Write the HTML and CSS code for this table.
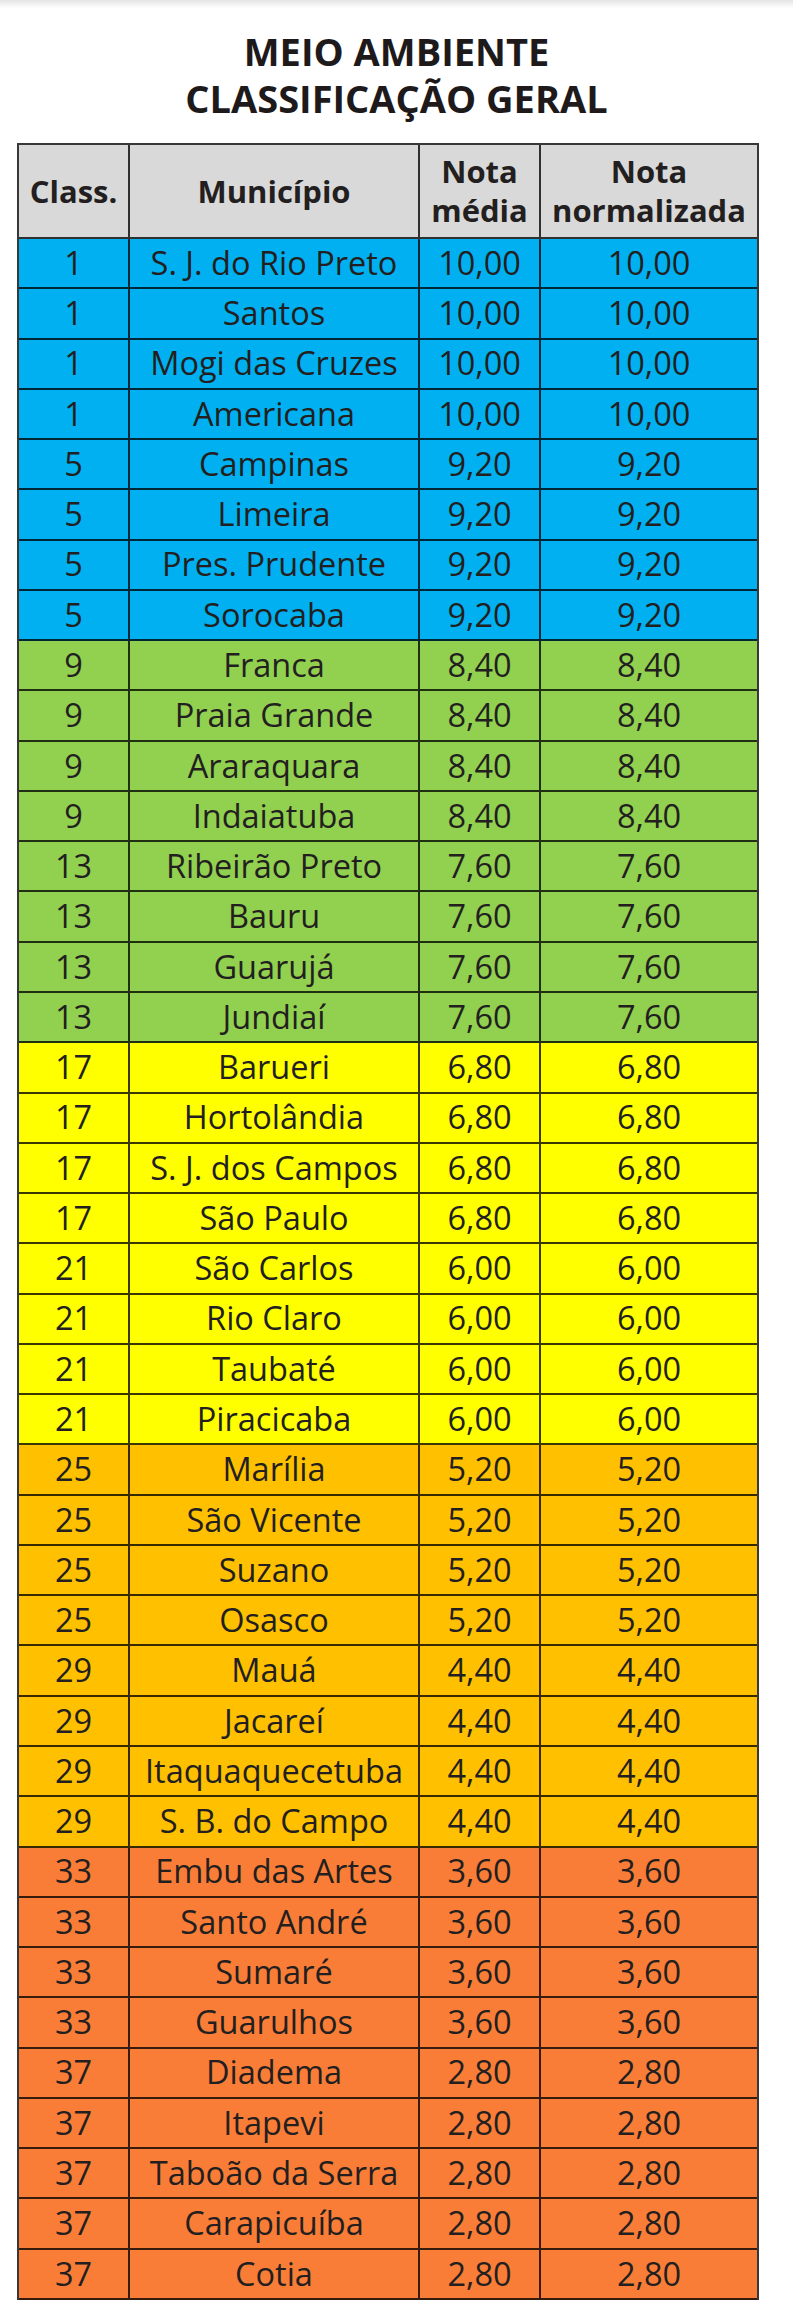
FILE: index.html
```html
<!DOCTYPE html>
<html lang="pt-BR">
<head>
<meta charset="utf-8">
<title>Meio Ambiente - Classificação Geral</title>
<link rel="stylesheet" href="styles.css">
</head>
<body>
<div class="topshade"></div>
<h1 class="title">MEIO AMBIENTE<br>CLASSIFICAÇÃO GERAL</h1>
<div class="table">
  <div class="row head">
    <div class="cell">Class.</div>
    <div class="cell">Município</div>
    <div class="cell">Nota<br>média</div>
    <div class="cell">Nota<br>normalizada</div>
  </div>
  <div class="row blue"><div class="cell">1</div><div class="cell">S. J. do Rio Preto</div><div class="cell">10,00</div><div class="cell">10,00</div></div>
  <div class="row blue"><div class="cell">1</div><div class="cell">Santos</div><div class="cell">10,00</div><div class="cell">10,00</div></div>
  <div class="row blue"><div class="cell">1</div><div class="cell">Mogi das Cruzes</div><div class="cell">10,00</div><div class="cell">10,00</div></div>
  <div class="row blue"><div class="cell">1</div><div class="cell">Americana</div><div class="cell">10,00</div><div class="cell">10,00</div></div>
  <div class="row blue"><div class="cell">5</div><div class="cell">Campinas</div><div class="cell">9,20</div><div class="cell">9,20</div></div>
  <div class="row blue"><div class="cell">5</div><div class="cell">Limeira</div><div class="cell">9,20</div><div class="cell">9,20</div></div>
  <div class="row blue"><div class="cell">5</div><div class="cell">Pres. Prudente</div><div class="cell">9,20</div><div class="cell">9,20</div></div>
  <div class="row blue"><div class="cell">5</div><div class="cell">Sorocaba</div><div class="cell">9,20</div><div class="cell">9,20</div></div>
  <div class="row green"><div class="cell">9</div><div class="cell">Franca</div><div class="cell">8,40</div><div class="cell">8,40</div></div>
  <div class="row green"><div class="cell">9</div><div class="cell">Praia Grande</div><div class="cell">8,40</div><div class="cell">8,40</div></div>
  <div class="row green"><div class="cell">9</div><div class="cell">Araraquara</div><div class="cell">8,40</div><div class="cell">8,40</div></div>
  <div class="row green"><div class="cell">9</div><div class="cell">Indaiatuba</div><div class="cell">8,40</div><div class="cell">8,40</div></div>
  <div class="row green"><div class="cell">13</div><div class="cell">Ribeirão Preto</div><div class="cell">7,60</div><div class="cell">7,60</div></div>
  <div class="row green"><div class="cell">13</div><div class="cell">Bauru</div><div class="cell">7,60</div><div class="cell">7,60</div></div>
  <div class="row green"><div class="cell">13</div><div class="cell">Guarujá</div><div class="cell">7,60</div><div class="cell">7,60</div></div>
  <div class="row green"><div class="cell">13</div><div class="cell">Jundiaí</div><div class="cell">7,60</div><div class="cell">7,60</div></div>
  <div class="row yellow"><div class="cell">17</div><div class="cell">Barueri</div><div class="cell">6,80</div><div class="cell">6,80</div></div>
  <div class="row yellow"><div class="cell">17</div><div class="cell">Hortolândia</div><div class="cell">6,80</div><div class="cell">6,80</div></div>
  <div class="row yellow"><div class="cell">17</div><div class="cell">S. J. dos Campos</div><div class="cell">6,80</div><div class="cell">6,80</div></div>
  <div class="row yellow"><div class="cell">17</div><div class="cell">São Paulo</div><div class="cell">6,80</div><div class="cell">6,80</div></div>
  <div class="row yellow"><div class="cell">21</div><div class="cell">São Carlos</div><div class="cell">6,00</div><div class="cell">6,00</div></div>
  <div class="row yellow"><div class="cell">21</div><div class="cell">Rio Claro</div><div class="cell">6,00</div><div class="cell">6,00</div></div>
  <div class="row yellow"><div class="cell">21</div><div class="cell">Taubaté</div><div class="cell">6,00</div><div class="cell">6,00</div></div>
  <div class="row yellow"><div class="cell">21</div><div class="cell">Piracicaba</div><div class="cell">6,00</div><div class="cell">6,00</div></div>
  <div class="row amber"><div class="cell">25</div><div class="cell">Marília</div><div class="cell">5,20</div><div class="cell">5,20</div></div>
  <div class="row amber"><div class="cell">25</div><div class="cell">São Vicente</div><div class="cell">5,20</div><div class="cell">5,20</div></div>
  <div class="row amber"><div class="cell">25</div><div class="cell">Suzano</div><div class="cell">5,20</div><div class="cell">5,20</div></div>
  <div class="row amber"><div class="cell">25</div><div class="cell">Osasco</div><div class="cell">5,20</div><div class="cell">5,20</div></div>
  <div class="row amber"><div class="cell">29</div><div class="cell">Mauá</div><div class="cell">4,40</div><div class="cell">4,40</div></div>
  <div class="row amber"><div class="cell">29</div><div class="cell">Jacareí</div><div class="cell">4,40</div><div class="cell">4,40</div></div>
  <div class="row amber"><div class="cell">29</div><div class="cell">Itaquaquecetuba</div><div class="cell">4,40</div><div class="cell">4,40</div></div>
  <div class="row amber"><div class="cell">29</div><div class="cell">S. B. do Campo</div><div class="cell">4,40</div><div class="cell">4,40</div></div>
  <div class="row orange"><div class="cell">33</div><div class="cell">Embu das Artes</div><div class="cell">3,60</div><div class="cell">3,60</div></div>
  <div class="row orange"><div class="cell">33</div><div class="cell">Santo André</div><div class="cell">3,60</div><div class="cell">3,60</div></div>
  <div class="row orange"><div class="cell">33</div><div class="cell">Sumaré</div><div class="cell">3,60</div><div class="cell">3,60</div></div>
  <div class="row orange"><div class="cell">33</div><div class="cell">Guarulhos</div><div class="cell">3,60</div><div class="cell">3,60</div></div>
  <div class="row orange"><div class="cell">37</div><div class="cell">Diadema</div><div class="cell">2,80</div><div class="cell">2,80</div></div>
  <div class="row orange"><div class="cell">37</div><div class="cell">Itapevi</div><div class="cell">2,80</div><div class="cell">2,80</div></div>
  <div class="row orange"><div class="cell">37</div><div class="cell">Taboão da Serra</div><div class="cell">2,80</div><div class="cell">2,80</div></div>
  <div class="row orange"><div class="cell">37</div><div class="cell">Carapicuíba</div><div class="cell">2,80</div><div class="cell">2,80</div></div>
  <div class="row orange"><div class="cell">37</div><div class="cell">Cotia</div><div class="cell">2,80</div><div class="cell">2,80</div></div>
</div>
</body>
</html>
```

FILE: styles.css
```css
html, body {
  margin: 0;
  padding: 0;
  background: #ffffff;
}
body {
  font-family: "Open Sans", "Noto Sans", "DejaVu Sans", sans-serif;
  color: #231f20;
}
.topshade {
  height: 8px;
  background: linear-gradient(#e4e4e4, #ffffff);
}
.title {
  margin: 0;
  padding-top: 20px;
  text-align: center;
  font-size: 38px;
  font-weight: 700;
  line-height: 47px;
  color: #1e1a1b;
}
.table {
  box-sizing: border-box;
  width: 742px;
  margin: 21px 0 0 17px;
  border: 2px solid rgba(0, 0, 0, 0.78);
  border-bottom: none;
}
.row {
  display: grid;
  grid-template-columns: 111px 290px 121px 1fr;
  height: 50.27px;
  box-sizing: border-box;
  border-bottom: 2px solid rgba(0, 0, 0, 0.78);
}
.row.head {
  height: 94px;
  background: #d9d9d9;
}
.cell {
  display: flex;
  align-items: center;
  justify-content: center;
  text-align: center;
  font-size: 32.5px;
  line-height: 1;
  border-right: 2px solid rgba(0, 0, 0, 0.78);
  white-space: nowrap;
}
.cell:last-child {
  border-right: none;
}
.head .cell {
  font-weight: 700;
  font-size: 31px;
  line-height: 39px;
  letter-spacing: 0;
}
.blue { background: #00b0f0; }
.green { background: #92d050; }
.yellow { background: #ffff00; }
.amber { background: #ffc000; }
.orange { background: #f97d36; }
```
